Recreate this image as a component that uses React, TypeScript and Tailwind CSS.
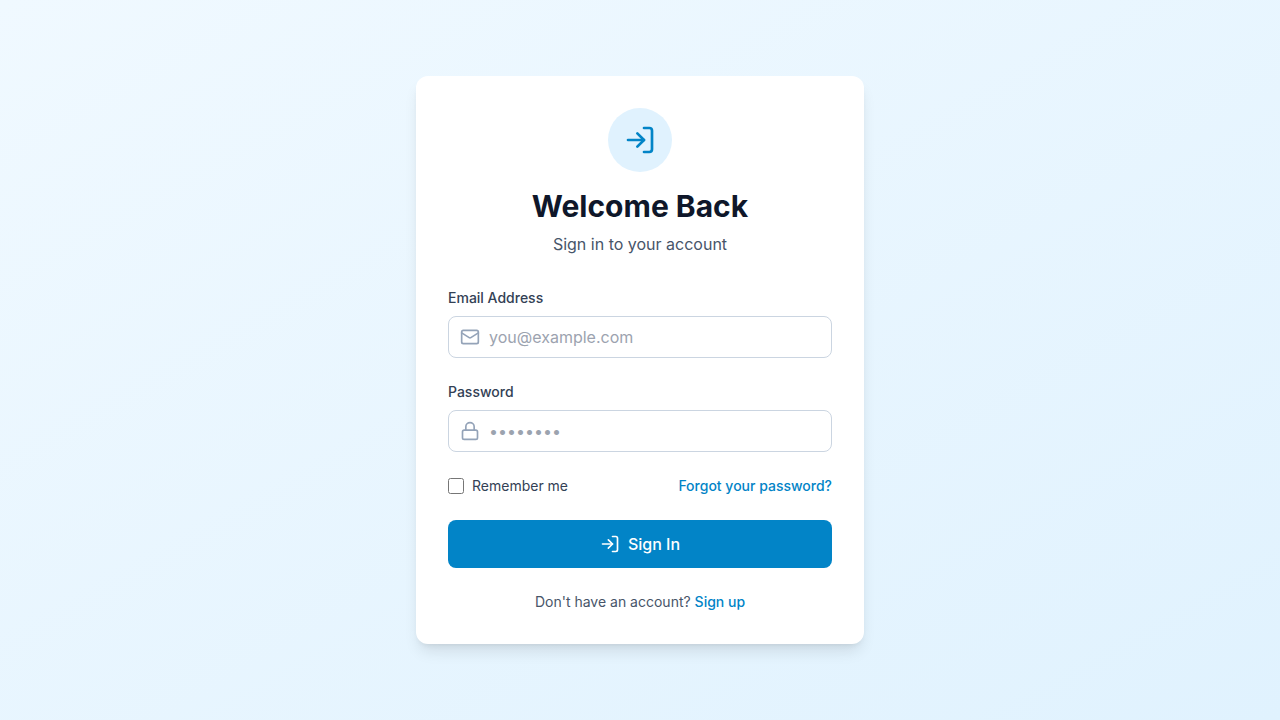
import { Lock, LogIn, Mail } from "lucide-react";

const inputClass =
  "block w-full rounded-lg border border-[#cbd5e1] bg-white py-2 pr-3 pl-10 text-base text-[#0f172a] placeholder:text-[#9ca3af] focus:border-[#0ea5e9] focus:outline-none focus:ring-2 focus:ring-[#0ea5e9]";

export default function App() {
  return (
    <main className="flex min-h-screen items-center justify-center bg-linear-to-br/srgb from-[#f0f9ff] to-[#e0f2fe] p-4 font-['Inter',sans-serif]">
      <div className="w-full max-w-md rounded-xl bg-white p-8 shadow-lg">
        <div className="mb-8 text-center">
          <div className="mx-auto mb-4 flex size-16 items-center justify-center rounded-full bg-[#e0f2fe]">
            <LogIn className="size-8 text-[#0284c7]" aria-hidden="true" />
          </div>
          <h1 className="text-3xl font-bold text-[#0f172a]">Welcome Back</h1>
          <p className="mt-2 text-base text-[#475569]">Sign in to your account</p>
        </div>

        <form className="space-y-6" onSubmit={(e) => e.preventDefault()}>
          <div>
            <label htmlFor="email" className="mb-2 block text-sm font-medium text-[#334155]">
              Email Address
            </label>
            <div className="relative">
              <Mail className="pointer-events-none absolute inset-y-0 left-3 my-auto size-5 text-[#94a3b8]" aria-hidden="true" />
              <input id="email" type="email" placeholder="you@example.com" className={inputClass} />
            </div>
          </div>

          <div>
            <label htmlFor="password" className="mb-2 block text-sm font-medium text-[#334155]">
              Password
            </label>
            <div className="relative">
              <Lock className="pointer-events-none absolute inset-y-0 left-3 my-auto size-5 text-[#94a3b8]" aria-hidden="true" />
              <input id="password" type="password" placeholder="••••••••" className={inputClass} />
            </div>
          </div>

          <div className="flex items-center justify-between">
            <div className="flex items-center">
              <input id="remember" type="checkbox" className="size-4 accent-[#0284c7]" />
              <label htmlFor="remember" className="ml-2 text-sm text-[#334155]">
                Remember me
              </label>
            </div>
            <a href="#forgot" className="text-sm font-medium text-[#0284c7] hover:text-[#0ea5e9]">
              Forgot your password?
            </a>
          </div>

          <button type="submit" className="flex w-full items-center justify-center gap-2 rounded-lg bg-[#0284c7] px-4 py-3 text-base font-medium text-white hover:bg-[#0369a1]">
            <LogIn className="size-5" aria-hidden="true" />
            Sign In
          </button>
        </form>

        <p className="mt-6 text-center text-sm text-[#475569]">
          Don't have an account?{" "}
          <a href="#signup" className="font-medium text-[#0284c7] hover:text-[#0ea5e9]">
            Sign up
          </a>
        </p>
      </div>
    </main>
  );
}
